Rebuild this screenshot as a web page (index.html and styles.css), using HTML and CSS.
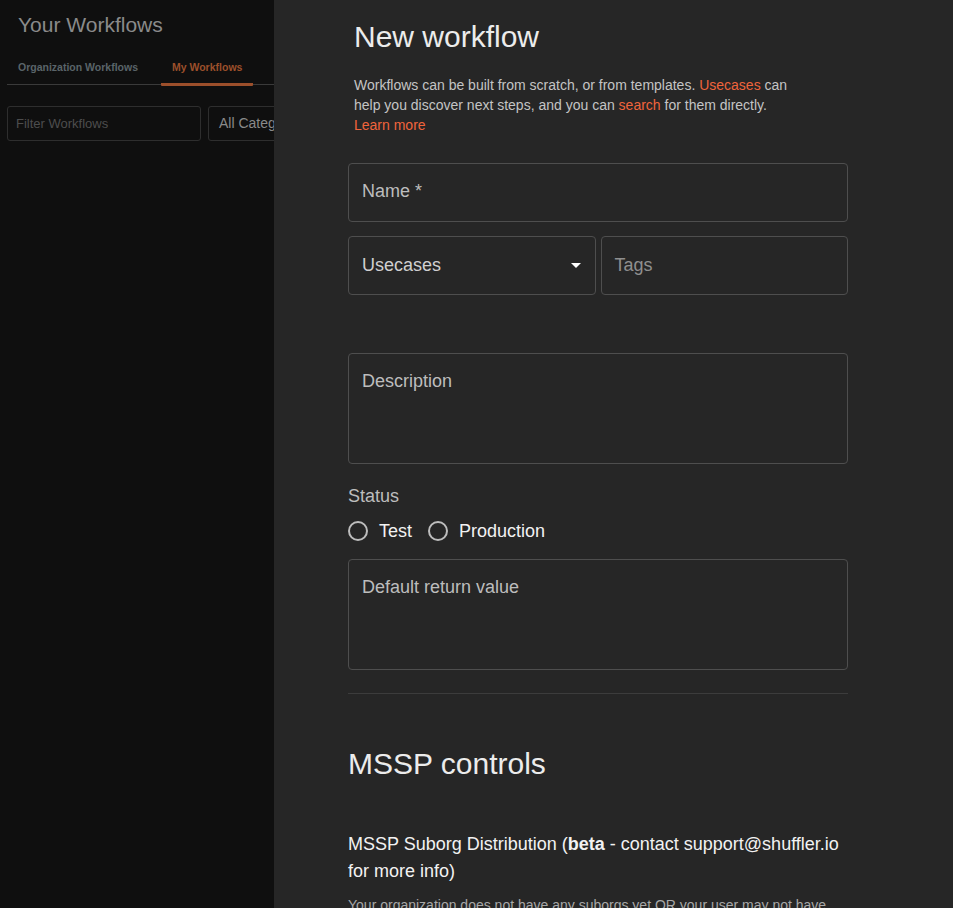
FILE: index.html
```html
<!DOCTYPE html>
<html>
<head>
<meta charset="utf-8">
<link rel="stylesheet" href="styles.css">
</head>
<body>
<div class="page">
  <aside class="left">
    <h1 class="left-title">Your Workflows</h1>
    <div class="tabs">
      <div class="tab">Organization Workflows</div>
      <div class="tab tab-active">My Workflows</div>
    </div>
    <div class="filters">
      <div class="filter-input">Filter Workflows</div>
      <div class="filter-select">All Categories</div>
    </div>
  </aside>
  <main class="drawer">
    <div class="content">
      <h2 class="title">New workflow</h2>
      <p class="intro">Workflows can be built from scratch, or from templates. <span class="link">Usecases</span> can help you discover next steps, and you can <span class="link">search</span> for them directly.<br><span class="link">Learn more</span></p>
      <div class="field field-name"><span class="label">Name *</span></div>
      <div class="row">
        <div class="field field-half select"><span class="label">Usecases</span>
          <svg class="caret" width="10" height="5" viewBox="0 0 10 5"><path d="M0 0h10L5 5z" fill="#ffffff"/></svg>
        </div>
        <div class="field field-half"><span class="label label-dim">Tags</span></div>
      </div>
      <div class="field field-tall desc"><span class="label">Description</span></div>
      <div class="status-label">Status</div>
      <div class="radios">
        <label class="radio"><span class="circle"></span>Test</label>
        <label class="radio"><span class="circle"></span>Production</label>
      </div>
      <div class="field field-tall"><span class="label">Default return value</span></div>
      <hr class="divider">
      <h2 class="mssp">MSSP controls</h2>
      <div class="mssp-sub">MSSP Suborg Distribution (<b>beta</b> - contact support@shuffler.io for more info)</div>
      <p class="note">Your organization does not have any suborgs yet OR your user may not have access to distribute workflows to them.</p>
    </div>
  </main>
</div>
</body>
</html>
```
FILE: styles.css
```css
html, body {
  margin: 0;
  padding: 0;
  height: 100%;
  overflow: hidden;
  background: #0f0f0f;
  font-family: "Liberation Sans", Arial, sans-serif;
}
.page {
  display: flex;
  height: 908px;
}
.left {
  width: 274px;
  flex: none;
  background: #0f0f0f;
  overflow: hidden;
}
.left-title {
  margin: 12px 0 0 18px;
  font-size: 21px;
  font-weight: 400;
  color: #8a8a8a;
  line-height: 26px;
}
.tabs {
  display: flex;
  margin: 12px 0 0 7px;
  height: 34px;
  border-bottom: 1px solid #3a3a3a;
}
.tab {
  padding: 0 11px;
  font-size: 10.5px;
  font-weight: 700;
  color: #5a6469;
  line-height: 34px;
  height: 34px;
  box-sizing: border-box;
  white-space: nowrap;
}
.tab + .tab { margin-left: 12px; }
.tab-active {
  color: #9c4f2b;
  border-bottom: 3px solid #9c4f2b;
  line-height: 34px;
  height: 36px;
  border-radius: 0 0 1px 1px;
}
.filters {
  display: flex;
  gap: 7px;
  margin: 21px 0 0 7px;
}
.filter-input, .filter-select {
  flex: none;
  border: 1px solid #2e2e2e;
  border-radius: 3px;
  box-sizing: border-box;
  height: 35px;
  line-height: 33px;
  white-space: nowrap;
  overflow: hidden;
}
.filter-input {
  width: 194px;
  padding-left: 8px;
  font-size: 13px;
  color: #4d4d4d;
}
.filter-select {
  width: 120px;
  padding-left: 10px;
  font-size: 14px;
  color: #8a8a8a;
}
.drawer {
  flex: 1;
  background: #262626;
  overflow: hidden;
}
.content {
  width: 500px;
  margin-left: 74px;
}
.title {
  margin: 20px 0 0 6px;
  font-size: 30px;
  font-weight: 400;
  color: #ececec;
  line-height: 34px;
}
.intro {
  margin: 21px 0 0 6px;
  width: 440px;
  font-size: 14px;
  line-height: 20px;
  color: #c4c4c4;
}
.link { color: #f0643c; }
.field {
  position: relative;
  box-sizing: border-box;
  border: 1px solid #4e4e4e;
  border-radius: 4px;
  padding: 17px 0 0 13px;
}
.label {
  font-size: 18px;
  color: #bdbdbd;
  line-height: 20px;
}
.label-dim { color: #8f8f8f; }
.field-name {
  margin-top: 28px;
  height: 59px;
}
.row {
  display: flex;
  gap: 5px;
  margin-top: 14px;
}
.field-half {
  flex: 1;
  height: 59px;
  padding-top: 18px;
}
.select .label { color: #d0d0d0; }
.caret {
  position: absolute;
  right: 14px;
  top: 26px;
}
.field-tall {
  height: 111px;
}
.desc { margin-top: 58px; }
.status-label {
  margin-top: 22px;
  font-size: 18px;
  color: #bdbdbd;
  line-height: 20px;
}
.radios {
  display: flex;
  gap: 16px;
  margin-top: 15px;
  margin-bottom: 18px;
}
.radio {
  display: flex;
  align-items: center;
  gap: 11px;
  font-size: 18px;
  color: #f2f2f2;
  line-height: 20px;
}
.circle {
  width: 16px;
  height: 16px;
  border: 2px solid #bdbdbd;
  border-radius: 50%;
}
.divider {
  margin: 23px 0 0 0;
  border: 0;
  border-top: 1px solid #3c3c3c;
}
.mssp {
  margin: 52px 0 0 0;
  font-size: 30px;
  font-weight: 400;
  color: #ececec;
  line-height: 36px;
}
.mssp-sub {
  margin-top: 49px;
  font-size: 18px;
  line-height: 27px;
  color: #f2f2f2;
}
.note {
  margin: 10px 0 0 0;
  font-size: 14px;
  line-height: 20px;
  color: #a8a8a8;
}
```
